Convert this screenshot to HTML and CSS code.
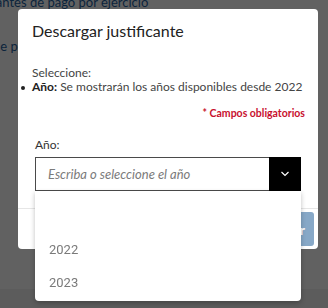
FILE: index.html
```html
<!DOCTYPE html>
<html lang="es">
<head>
  <meta charset="UTF-8" />
  <title>Descargar justificante</title>
  <meta name="viewport" content="width=device-width, initial-scale=1" />
  <link rel="stylesheet" href="styles.css">
</head>
<body>

  <div class="page">
    <p class="page-title">Justificantes de pago por ejercicio</p>
    <p class="page-link">de pago</p>
    <div class="page-footer"></div>
  </div>

  <div class="overlay"></div>

  <section class="modal" role="dialog" aria-labelledby="modalTitle">
    <header class="modal-header">
      <h2 id="modalTitle">Descargar justificante</h2>
    </header>

    <div class="modal-body">
      <p class="intro">Seleccione:</p>
      <ul class="hints">
        <li><strong>Año:</strong> Se mostrarán los años disponibles desde 2022</li>
      </ul>
      <p class="required">* Campos obligatorios</p>

      <div class="field">
        <label for="anio">Año:</label>
        <div class="combo">
          <input type="text" id="anio" name="anio" placeholder="Escriba o seleccione el año" autocomplete="off" />
          <button type="button" class="combo-toggle" aria-label="Mostrar años">
            <svg width="10" height="6" viewBox="0 0 10 6" aria-hidden="true">
              <path d="M1.5 1 L5 4.5 L8.5 1" fill="none" stroke="#fff" stroke-width="1.2" />
            </svg>
          </button>
          <ul class="combo-list" role="listbox">
            <li role="option"></li>
            <li role="option">2022</li>
            <li role="option">2023</li>
          </ul>
        </div>
      </div>
    </div>

    <footer class="modal-footer">
      <button type="button" class="btn-primary">Descargar</button>
    </footer>
  </section>

</body>
</html>
```

FILE: styles.css
```css
/* Reset básico */
* {
  box-sizing: border-box;
  margin: 0;
  padding: 0;
  font-family: 'Lato', sans-serif;
}

body {
  background: #fff;
  height: 100vh;
  overflow: hidden;
}

/* Página de fondo */
.page {
  height: 100vh;
  display: flex;
  flex-direction: column;
}
.page-title {
  margin: -6px 0 0 -44px;
  font-size: 13px;
  color: #1f5f9e;
}
.page-link {
  margin: 28px 0 0 -7px;
  font-size: 13px;
  color: #1f5f9e;
}
.page-footer {
  margin-top: auto;
  height: 19px;
  background: #f1f1f1;
}

.overlay {
  position: fixed;
  inset: 0;
  background: rgba(0, 0, 0, 0.62);
}

/* Modal */
.modal {
  position: absolute;
  top: 9px;
  left: 18px;
  width: 300px;
  height: 240px;
  background: #fff;
  border-radius: 4px;
  display: flex;
  flex-direction: column;
  color: #333;
}

.modal-header {
  padding: 12px 14px 0;
}
.modal-header h2 {
  font-size: 16px;
  font-weight: 400;
  color: #222;
  line-height: 19px;
}

.modal-body {
  padding: 26px 13px 0 14px;
  flex: 1;
}

.intro,
.hints {
  font-size: 12px;
  line-height: 13.5px;
  color: #444;
}
.hints {
  list-style: none;
}
.hints li {
  position: relative;
}
.hints li::before {
  content: "";
  position: absolute;
  left: -11px;
  top: 6px;
  width: 4px;
  height: 4px;
  border-radius: 50%;
  background: #222;
}
.hints strong {
  font-weight: 700;
  color: #222;
}

.required {
  margin-top: 14px;
  text-align: right;
  font-size: 10.5px;
  font-weight: 700;
  color: #c8102e;
}

.field {
  margin: 18px 4px 0 3px;
}
.field label {
  display: block;
  font-size: 12px;
  color: #333;
  margin-bottom: 5px;
}

.combo {
  position: relative;
  display: flex;
  height: 34px;
}
.combo input {
  flex: 1;
  min-width: 0;
  border: 1px solid #4a4a4a;
  border-right: none;
  padding: 0 12px;
  font-size: 13px;
  color: #333;
  outline: none;
}
.combo input::placeholder {
  font-style: italic;
  color: #7b7b7b;
}
.combo-toggle {
  width: 32px;
  border: none;
  background: #000;
  display: flex;
  align-items: center;
  justify-content: center;
  cursor: pointer;
}

.combo-list {
  position: absolute;
  top: 34px;
  left: 0;
  right: 0;
  z-index: 2;
  list-style: none;
  background: #fff;
  padding: 9px 0 2px;
  border-radius: 0 0 4px 4px;
  box-shadow: 0 2px 5px rgba(0, 0, 0, 0.25);
}
.combo-list li {
  height: 33px;
  line-height: 33px;
  padding-left: 14px;
  font-family: 'Roboto', sans-serif;
  font-size: 13px;
  color: #7a7a7a;
}

.modal-footer {
  border-top: 1px solid #e6e6e6;
  height: 41px;
  display: flex;
  justify-content: flex-end;
  align-items: center;
  padding-right: 4px;
}
.btn-primary {
  height: 34px;
  padding: 0 9px 0 14px;
  border: none;
  border-radius: 3px;
  background: #87a8c7;
  color: #fff;
  font-size: 14px;
  font-weight: 700;
}
```
